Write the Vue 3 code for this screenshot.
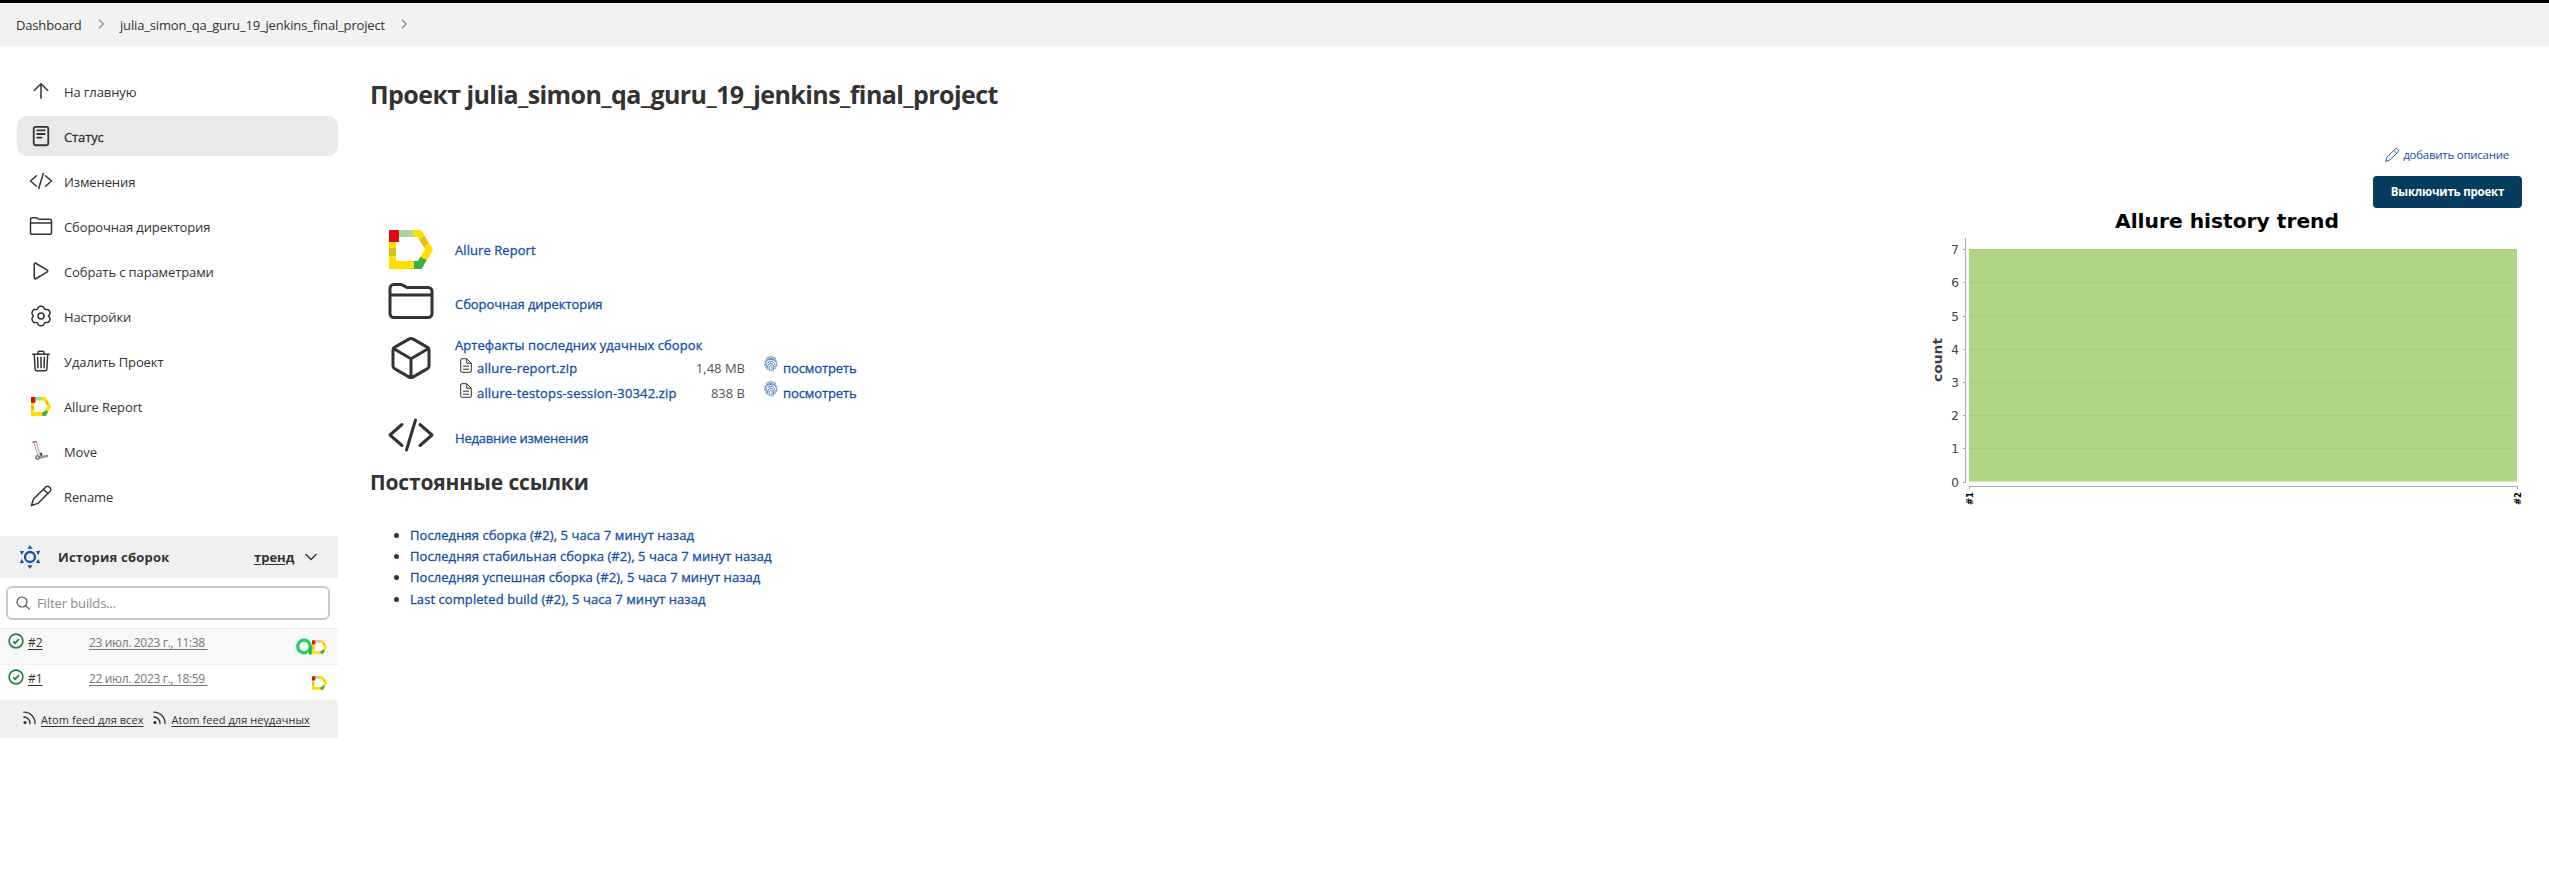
<script setup>
const stroke = {
  up: ['M112 244l144-144 144 144M256 120v292'],
  doc: ['M141 59h230a40 40 0 0140 40v314a40 40 0 01-40 40H141a40 40 0 01-40-40V99a40 40 0 0140-40z', 'M176 136h160M176 213h160M176 290h90'],
  code: ['M160 368L32 256l128-112M352 368l128-112-128-112M304 96l-96 320'],
  folder: ['M440 432H72a40 40 0 01-40-40V120a40 40 0 0140-40h75.89a40 40 0 0122.19 6.72l27.84 18.56a40 40 0 0022.19 6.72H440a40 40 0 0140 40v240a40 40 0 01-40 40zM32 192h448'],
  play: ['M112 111v290c0 17.44 17 28.52 31 20.16l247.9-148.37c12.12-7.25 12.12-26.33 0-33.58L143 90.84c-14-8.36-31 2.72-31 20.16z'],
  gear: [gearPath(), 'M256 192a64 64 0 100 128 64 64 0 000-128z'],
  trash: ['M112 112l20 320c.95 18.49 14.4 32 32 32h184c17.67 0 30.87-13.51 32-32l20-320M80 112h352', 'M192 112V72a24 24 0 0124-24h80a24 24 0 0124 24v40M256 176v224M184 176l8 224M328 176l-8 224'],
  pencil: ['M358 62a52 52 0 0174 0l18 18a52 52 0 010 74L190 414 52 460l46-138z', 'M310 110l92 92'],
  cube: ['M448 341.37V170.61A32 32 0 00432.11 143l-152-88.46a47.94 47.94 0 00-48.24 0L79.89 143A32 32 0 0064 170.61v170.76A32 32 0 0079.89 369l152 88.46a48 48 0 0048.24 0l152-88.46A32 32 0 00448 341.37zM69 154l187 110 187-110M256 464V264'],
}

// Six-lobed outline of the settings icon
function gearPath() {
  const pts = []
  for (let i = 0; i < 72; i++) {
    const a = (i * Math.PI) / 36
    const t = 6 * (a - Math.PI / 2)
    const r = 192 + 21 * Math.cos(t) - 6 * Math.cos(2 * t)
    pts.push(`${(256 + r * Math.cos(a)).toFixed(1)} ${(256 + r * Math.sin(a)).toFixed(1)}`)
  }
  return 'M' + pts.join('L') + 'z'
}

const menu = [
  { icon: 'up', label: 'На главную' },
  { icon: 'doc', label: 'Статус', active: true },
  { icon: 'code', label: 'Изменения' },
  { icon: 'folder', label: 'Сборочная директория' },
  { icon: 'play', label: 'Собрать с параметрами' },
  { icon: 'gear', label: 'Настройки' },
  { icon: 'trash', label: 'Удалить Проект' },
  { icon: 'allure', label: 'Allure Report' },
  { icon: 'move', label: 'Move' },
  { icon: 'pencil', label: 'Rename' },
]
const builds = [
  { id: '#2', date: '23 июл. 2023 г., 11:38', testops: true },
  { id: '#1', date: '22 июл. 2023 г., 18:59', testops: false },
]
const files = [
  { name: 'allure-report.zip', size: '1,48 MB' },
  { name: 'allure-testops-session-30342.zip', size: '838 B' },
]
const links = [
  'Последняя сборка (#2), 5 часа 7 минут назад',
  'Последняя стабильная сборка (#2), 5 часа 7 минут назад',
  'Последняя успешная сборка (#2), 5 часа 7 минут назад',
  'Last completed build (#2), 5 часа 7 минут назад',
]
const ticks = [0, 1, 2, 3, 4, 5, 6, 7].map((n) => ({ n, y: Math.round(273.5 - n * 33.2) + 0.5 }))
</script>

<template>
  <svg class="defs" width="0" height="0">
    <symbol id="allure" viewBox="0 0 44 39">
      <path fill="#ffde00" d="M0 0H32L44 19.500 33 39H0z" />
      <path fill="#e30613" d="M0 0h10v12H0z" />
      <path fill="#a8d5a2" d="M10 0h14v7H10z" />
      <path fill="#e0c113" d="M0 18h7v8H0z" />
      <path fill="#fff" d="M7 12h3V7H28.500L36 19.500 29 31H7z" />
      <path fill="#e0c113" d="M30.500 9.500l5-3.500 4 7.500-5 3.300z" />
      <path fill="#3fae49" d="M25 31h4l2-4 6.500 3-5 9H25z" />
    </symbol>
  </svg>

  <div class="page">
    <nav class="crumbs">
      <span class="c1">Dashboard</span>
      <svg width="7" height="10" viewBox="0 0 7 10"><path d="M1 .8L5.300 5 1 9.200" /></svg>
      <span class="c2">julia_simon_qa_guru_19_jenkins_final_project</span>
      <svg width="7" height="10" viewBox="0 0 7 10"><path d="M1 .8L5.300 5 1 9.200" /></svg>
    </nav>

    <div class="body">
      <aside>
        <ul class="menu">
          <li v-for="m in menu" :key="m.label" :class="{ active: m.active }">
            <svg v-if="m.icon === 'allure'" class="i-allure" width="20" height="19" viewBox="0 0 44 39" preserveAspectRatio="none"><use href="#allure" width="44" height="39" /></svg>
            <svg v-else-if="m.icon === 'move'" class="i-move" width="24" height="24" viewBox="0 0 24 24">
              <path d="M5 3.500l4 14M7.500 3l3.500 13.500" fill="none" stroke="#999" stroke-width=".9" />
              <path d="M3.500 3.400L7.500 2.400" stroke="#c43c4c" stroke-width="1.400" />
              <path d="M9 17.500l10-2v2.500l-9 2z" fill="#999" />
              <path d="M11 13.800l1.500-.4 1 3.200-2 .5z" fill="#333" />
              <circle cx="8.500" cy="18.500" r="1.900" fill="#ccc" stroke="#555" />
            </svg>
            <svg v-else class="ion" width="24" height="24" viewBox="0 0 512 512"><path v-for="d in stroke[m.icon]" :key="d" :d="d" /></svg>
            <span>{{ m.label }}</span>
          </li>
        </ul>

        <section class="history">
          <header>
            <svg class="sun" width="22" height="24" viewBox="0 0 22 24">
              <circle cx="11" cy="12" r="5" fill="none" stroke="#1450a8" stroke-width="2.300" />
              <path fill="#1450a8" d="M11 0l2.500 3.800h-5zM11 24l2.500-3.800h-5zM.8 5.800l4.400.4-2.600 3.900zM21.200 5.800l-4.400.4 2.600 3.900zM.8 18.200l4.400-.4-2.600-3.900zM21.200 18.200l-4.400-.4 2.600-3.900z" />
            </svg>
            <b>История сборок</b>
            <a>тренд</a>
            <svg width="12" height="8" viewBox="0 0 12 8"><path d="M1 1.500l5 5 5-5" fill="none" stroke="#333" stroke-width="1.500" stroke-linecap="round" /></svg>
          </header>
          <div class="filter">
            <svg width="15" height="15" viewBox="0 0 15 15"><circle cx="6" cy="6" r="5" /><path d="M9.700 9.700l4 4" /></svg>
            <span>Filter builds...</span>
          </div>
          <div v-for="b in builds" :key="b.id" class="build">
            <svg width="16" height="16" viewBox="0 0 16 16"><circle cx="8" cy="8" r="6.900" /><path class="tick" d="M5.200 8.300l2 1.900 3.700-4.200" /></svg>
            <a class="num">{{ b.id }}</a>
            <a class="date">{{ b.date }}&nbsp;</a>
            <span class="badges">
              <svg v-if="b.testops" width="16" height="17" viewBox="0 0 16 17">
                <circle cx="8" cy="8.500" r="6.300" fill="none" stroke="#1fd15f" stroke-width="3.200" />
                <path d="M14.400 8v8.500" stroke="#17b955" stroke-width="2.800" />
              </svg>
              <svg width="15" height="14"><use href="#allure" /></svg>
            </span>
          </div>
          <footer>
            <template v-for="(t, i) in ['Atom feed для всех', 'Atom feed для неудачных']" :key="t">
              <svg width="13" height="14" viewBox="0 0 13 14">
                <circle cx="2" cy="11.500" r="1.600" fill="#333" />
                <path d="M.8 6a6.200 6.200 0 016.200 6.700M.8 1.200A11 11 0 0112 12.700" fill="none" stroke="#333" stroke-width="1.300" stroke-linecap="round" />
              </svg>
              <a :class="'feed' + i">{{ t }}</a>
            </template>
          </footer>
        </section>
      </aside>

      <main>
        <div class="left">
          <h1>Проект julia_simon_qa_guru_19_jenkins_final_project</h1>
          <div class="row r1">
            <svg class="big-allure" width="44" height="39"><use href="#allure" /></svg>
            <a>Allure Report</a>
          </div>
          <div class="row r2">
            <svg class="ion" width="48" height="48" viewBox="0 0 512 512"><path :d="stroke.folder[0]" /></svg>
            <a>Сборочная директория</a>
          </div>
          <div class="row r3">
            <svg class="ion" width="48" height="48" viewBox="0 0 512 512"><path :d="stroke.cube[0]" /></svg>
            <div>
              <a class="art">Артефакты последних удачных сборок</a>
              <div v-for="f in files" :key="f.name" class="file">
                <svg class="fdoc" width="12" height="15" viewBox="0 0 12 15"><path d="M.7 2A1.300 1.300 0 012 .7h4.700l4.600 4.600V13a1.300 1.300 0 01-1.300 1.300H2A1.300 1.300 0 01.7 13zM6.700.7v4.600h4.600M3 8.200h6M3 11.200h6" /></svg>
                <a class="fname">{{ f.name }}</a>
                <span class="size">{{ f.size }}</span>
                <svg class="finger" width="14" height="16" viewBox="0 0 14 16">
                  <path d="M2.200 2.600C5 .2 9.200.2 12 2.800M.8 5.800C3.200 1.600 10.500 1.400 13.200 6M1 10c-.6-4.500 2.500-6.400 6-6.400s6.200 2.500 5.800 7M2.200 12.500C1.600 8 3.500 5.600 7 5.600s4.600 3 4 7.400M4 14c-1-4.500.4-6.500 3-6.500s3 3 2.300 7.200M6 15c-1-4-.6-5.600 1-5.600s1.200 3 .6 6" />
                </svg>
                <a class="look">посмотреть</a>
              </div>
            </div>
          </div>
          <div class="row r4">
            <svg class="ion" width="48" height="48" viewBox="0 0 512 512"><path :d="stroke.code[0]" /></svg>
            <a>Недавние изменения</a>
          </div>
          <h2>Постоянные ссылки</h2>
          <ul class="links">
            <li v-for="l in links" :key="l"><a>{{ l }}</a></li>
          </ul>
        </div>

        <div class="right">
          <a class="describe">
            <svg width="16" height="16" viewBox="0 0 512 512"><path v-for="d in stroke.pencil" :key="d" :d="d" /></svg>
            <span>добавить описание</span>
          </a>
          <button>Выключить проект</button>
          <svg class="chart" width="600" height="310" viewBox="0 0 600 310">
            <text x="193" y="20" class="title" textLength="224" lengthAdjust="spacingAndGlyphs">Allure history trend</text>
            <rect x="47" y="41" width="548" height="232.500" fill="#aed684" />
            <g v-for="t in ticks" :key="t.n">
              <path v-if="t.n" class="grid" :d="`M47 ${t.y}H595`" />
              <path class="axis" :d="`M41 ${t.y}H44`" />
              <text x="37" :y="t.y + 4.5" class="tl">{{ t.n }}</text>
            </g>
            <path class="axis" d="M43.500 30V274M47 278.500H595.500M47.500 278V281M595.500 278V281" />
            <text class="count" transform="translate(20 174) rotate(-90)" textLength="44" lengthAdjust="spacingAndGlyphs">count</text>
            <text class="xl" transform="translate(51 297) rotate(-90)" textLength="13" lengthAdjust="spacingAndGlyphs">#1</text>
            <text class="xl" transform="translate(598.500 297) rotate(-90)" textLength="13" lengthAdjust="spacingAndGlyphs">#2</text>
          </svg>
        </div>
      </main>
    </div>
  </div>
</template>

<style>
body { margin: 0; background: #fff; }
</style>

<style scoped>
.defs { position: absolute; }
.page {
  height: 888px;
  overflow: hidden;
  box-sizing: border-box;
  border-top: 3px solid #000;
  font: 13px/20px "Open Sans", "Noto Sans", sans-serif;
  color: #333;
  white-space: nowrap;
}
svg { flex: none; display: block; }
.ion path { fill: none; stroke: #333; stroke-width: 32; stroke-linecap: round; stroke-linejoin: round; }
.crumbs { height: 43px; background: #f2f2f2; display: flex; align-items: center; padding-left: 16px; box-sizing: border-box; }
.crumbs svg { margin-top: -1px; }
.crumbs svg path { fill: none; stroke: #888; stroke-width: 1.2; }
.crumbs span { letter-spacing: -.16px; }
.c1 { width: 82px; }
.c2 { width: 268px; margin-left: 15px; margin-right: 13px; }
.body { display: flex; }
aside { width: 338px; flex: none; }
.menu { list-style: none; margin: 25px 0 0 17px; padding: 0; display: grid; gap: 5px; }
.menu li { height: 40px; display: flex; align-items: center; padding-left: 12px; border-radius: 10px; }
.menu li span { margin: 2px 0 0 11px; letter-spacing: -.11px; }
.menu .active { background: #e9e9e9; }
.menu .active span { -webkit-text-stroke: .3px; }
.menu .active .ion path { stroke-width: 38; }
.menu .i-allure { margin: 0 2px; }
.history { margin-top: 20px; }
.history header { height: 42px; background: #f0f0f0; display: flex; align-items: center; padding-left: 19px; }
.history header b { width: 196px; margin: -1px 0 0 17px; font-weight: 700; letter-spacing: .22px; }
.history header a { width: 51px; margin-top: -1px; font-weight: 700; text-decoration: underline; text-underline-offset: 2px; }
.filter { height: 34px; width: 324px; box-sizing: border-box; margin: 8px 0 8px 6px; border: 2px solid #c3ccd1; border-radius: 6px; display: flex; align-items: center; padding-left: 8px; color: #8a8a8a; }
.filter svg circle, .filter svg path { fill: none; stroke: #444; stroke-width: 1.1; }
.filter span { margin-left: 6px; letter-spacing: -.1px; }
.build { height: 36px; box-sizing: border-box; border-top: 1px solid #f0ecea; display: flex; align-items: flex-start; padding: 4px 11px 0 8px; font-size: 12px; }
.build:nth-of-type(2) { background: #f8f8f8; }
.build > svg { fill: none; stroke: #1d8048; stroke-width: 1.6; }
.tick { stroke-width: 1.8; }
.build a { text-decoration: underline; text-underline-offset: 2px; }
.num { width: 61px; margin-left: 4px; }
.date { color: #777; margin-right: auto; letter-spacing: -.34px; }
.badges { display: flex; align-items: center; margin-top: 5px; height: 17px; }
.history footer { height: 38px; background: #f0f0f0; display: flex; align-items: center; font-size: 11px; padding-left: 23px; }
.history footer svg { margin: -3px 5px 0 0; }
.history footer a { text-decoration: underline; text-underline-offset: 2px; margin-top: 2px; letter-spacing: .07px; }
.history footer .feed0 { margin-right: 9px; }
.history footer .feed1 { margin-left: 1px; }
main { flex: 1; display: flex; justify-content: space-between; padding: 0 27px 0 32px; color: #333; }
main a { color: #144ea3; -webkit-text-stroke: .3px #144ea3; letter-spacing: .07px; }
h1 { margin: 32px 0 0; font-size: 25px; line-height: 32px; font-weight: 700; letter-spacing: -.58px; }
.row { display: flex; align-items: center; padding-left: 17px; }
.row > a, .row > div { margin-left: 20px; }
.r1 { height: 40px; margin-top: 119px; }
.r1 > a { margin-top: 2px; }
.big-allure { margin: 0 2px; }
.r2 { height: 48px; margin-top: 8px; }
.r2 > a { margin-top: 5px; letter-spacing: -.05px; }
.r3 { height: 74px; margin-top: 9px; align-items: flex-start; }
.r4 { height: 48px; margin-top: 3px; }
.r4 > a { margin-top: 5px; letter-spacing: -.2px; }
.art { display: block; height: 20px; padding-top: 1px; }
.file { display: flex; height: 25px; align-items: center; padding-left: 5px; }
.fdoc { margin-top: -5px; }
.fdoc path { fill: none; stroke: #333; stroke-width: 1; }
.fname { width: 203px; margin-left: 5px; letter-spacing: .16px; }
.size { width: 65px; text-align: right; color: #555; }
.finger { margin: -7px 5px 0 19px; fill: none; stroke: #3c6fb8; stroke-width: .9; }
.look { letter-spacing: -.1px; }
h2 { margin: 9px 0 0; font-size: 21px; line-height: 28px; font-weight: 700; letter-spacing: -.15px; }
.links { margin: 28.500px 0 0; padding-left: 40px; line-height: 21.4px; }
.right { display: flex; flex-direction: column; align-items: flex-end; width: 600px; }
.describe { display: flex; align-items: center; height: 20px; margin: 99px 13px 0 0; font-size: 11.5px; letter-spacing: -.26px; -webkit-text-stroke: 0; }
.describe svg { margin-right: 3px; fill: none; stroke: #144ea3; stroke-width: 28; stroke-linejoin: round; }
button { width: 149px; height: 32px; margin-top: 11px; padding: 0; border: 0; border-radius: 4px; background: #063d5f; color: #fff; font: 700 11.5px/32px "Open Sans", sans-serif; letter-spacing: -.2px; }
.chart { font-family: "DejaVu Sans", sans-serif; overflow: visible; }
.title { font-size: 19px; font-weight: 700; fill: #000; }
.tl { font-size: 12px; text-anchor: end; fill: #404040; }
.count { font-size: 13px; font-weight: 700; fill: #404040; }
.xl { font-size: 9.5px; font-weight: 700; fill: #000; }
.grid { stroke: #99c474; stroke-width: 1; stroke-dasharray: 2 2; }
.axis { stroke: #aaa; stroke-width: 1; fill: none; }
</style>
